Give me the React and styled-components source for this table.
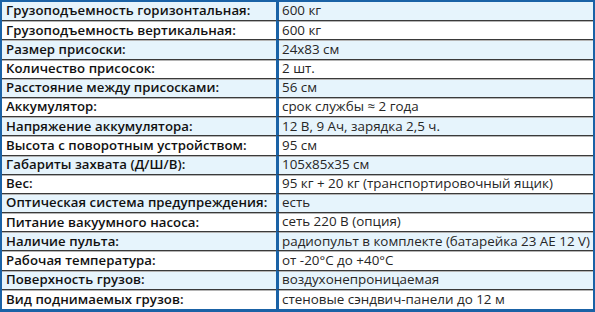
import React from "react";
import styled, { createGlobalStyle } from "styled-components";

const Global = createGlobalStyle`
  html, body { margin: 0; padding: 0; background: #fff; }
  #root { width: 595px; height: 312px; }
`;

const Table = styled.div`
  box-sizing: border-box;
  width: 595px;
  height: 312px;
  border: 2px solid #1a62a6;
  border-bottom-width: 3px;
  display: grid;
  grid-template-columns: 274px 1fr;
  grid-template-rows: repeat(16, 1fr);
  font-family: "Open Sans", "Noto Sans", sans-serif;
  color: #161616;
  overflow: hidden;
`;

const Cell = styled.div`
  box-sizing: border-box;
  display: flex;
  align-items: center;
  background: ${(p) => (p.$alt ? "#e6f4fc" : "#ffffff")};
  border-bottom: ${(p) => (p.$last ? "none" : "1px solid #3a3a3a")};
  box-shadow: ${(p) => (p.$first ? "none" : "inset 0 1px 0 #b4b4b4")};
  white-space: nowrap;
  overflow: hidden;
  line-height: 1;
`;

const Label = styled(Cell)`
  padding-left: 4px;
  font-size: 13.2px;
  font-weight: 600;
  letter-spacing: 0.05px;
  color: #111;
`;

const Value = styled(Cell)`
  padding-left: 3px;
  border-left: 3px solid #1a62a6;
  font-size: 13.4px;
  font-weight: 400;
  color: #262626;
  letter-spacing: 0;
`;

const rows = [
  ["Грузоподъемность горизонтальная:", "600 кг"],
  ["Грузоподъемность вертикальная:", "600 кг"],
  ["Размер присоски:", "24х83 см"],
  ["Количество присосок:", "2 шт."],
  ["Расстояние между присосками:", "56 см"],
  ["Аккумулятор:", "срок службы ≈ 2 года"],
  ["Напряжение аккумулятора:", "12 В, 9 Ач, зарядка 2,5 ч."],
  ["Высота с поворотным устройством:", "95 см"],
  ["Габариты захвата (Д/Ш/В):", "105х85х35 см"],
  ["Вес:", "95 кг + 20 кг (транспортировочный ящик)"],
  ["Оптическая система предупреждения:", "есть"],
  ["Питание вакуумного насоса:", "сеть 220 В (опция)"],
  ["Наличие пульта:", "радиопульт в комплекте (батарейка 23 АЕ 12 V)"],
  ["Рабочая температура:", "от -20°С до +40°С"],
  ["Поверхность грузов:", "воздухонепроницаемая"],
  ["Вид поднимаемых грузов:", "стеновые сэндвич-панели до 12 м"],
];

export default function App() {
  return (
    <>
      <Global />
      <Table>
        {rows.map(([l, v], i) => {
          const p = { $alt: i % 2 === 0, $first: i === 0, $last: i === rows.length - 1 };
          return (
            <React.Fragment key={i}>
              <Label {...p}>{l}</Label>
              <Value {...p}>{v}</Value>
            </React.Fragment>
          );
        })}
      </Table>
    </>
  );
}
